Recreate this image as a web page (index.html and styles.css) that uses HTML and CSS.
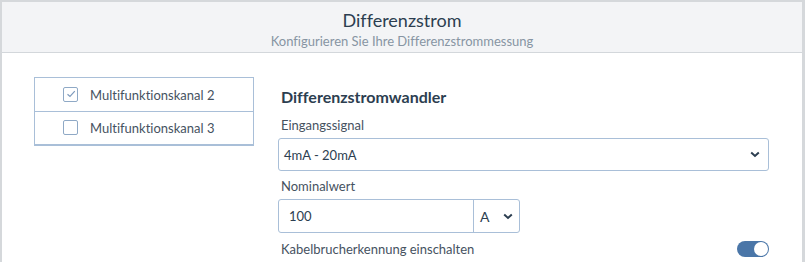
FILE: index.html
```html
<!DOCTYPE html>
<html lang="de">
<head>
<meta charset="utf-8">
<link rel="stylesheet" href="styles.css">
</head>
<body>
<div class="card">
  <div class="header">
    <div class="title">Differenzstrom</div>
    <div class="subtitle">Konfigurieren Sie Ihre Differenzstrommessung</div>
  </div>
  <div class="content">
    <div class="channels">
      <div class="channel">
        <span class="check checked"><svg width="12" height="12" viewBox="0 0 12 12"><path d="M2.5 6.2 L5 8.5 L9.8 3.2" fill="none" stroke="#7f9bbd" stroke-width="1.2"/></svg></span>
        <span class="chlabel">Multifunktionskanal 2</span>
      </div>
      <div class="channel">
        <span class="check"></span>
        <span class="chlabel">Multifunktionskanal 3</span>
      </div>
    </div>
    <div class="form">
      <h2 class="heading">Differenzstromwandler</h2>
      <div class="label first">Eingangssignal</div>
      <div class="select">
        <span>4mA - 20mA</span>
        <svg class="chev" width="10" height="7" viewBox="0 0 10 7"><path d="M1.2 1.5 L5 5 L8.8 1.5" fill="none" stroke="#2c3e50" stroke-width="2"/></svg>
      </div>
      <div class="label">Nominalwert</div>
      <div class="group">
        <div class="value">100</div>
        <div class="unit"><span>A</span><svg class="chev" width="10" height="7" viewBox="0 0 10 7"><path d="M1.2 1.5 L5 5 L8.8 1.5" fill="none" stroke="#2c3e50" stroke-width="2"/></svg></div>
      </div>
      <div class="switchrow">
        <span class="label">Kabelbrucherkennung einschalten</span>
        <span class="toggle"><span class="knob"></span></span>
      </div>
    </div>
  </div>
</div>
</body>
</html>
```
FILE: styles.css
```css
* { box-sizing: border-box; }
html, body { margin: 0; padding: 0; }
body {
  background: #d5d8db;
  font-family: "Lato", "Noto Sans", sans-serif;
  font-variant-ligatures: none;
  width: 805px;
  height: 262px;
  overflow: hidden;
  padding: 2px 2px 0 2px;
}
.card {
  background: #fff;
  height: 260px;
  width: 800px;
  overflow: hidden;
}
.header {
  background: #f3f4f6;
  border-bottom: 1px solid #d3d7db;
  height: 51px;
  text-align: center;
  padding-top: 7px;
}
.title {
  font-size: 18px;
  color: #2c3e50;
  line-height: 22px;
}
.subtitle {
  font-size: 13px;
  color: #8795a3;
  line-height: 18px;
  margin-top: 1px;
}
.content {
  display: flex;
  padding: 24px 0 0 32px;
}
.channels {
  width: 220px;
  border: 1px solid #a9bfd8;
  border-bottom-width: 2px;
  align-self: flex-start;
}
.channel {
  height: 33px;
  display: flex;
  align-items: center;
  padding-left: 28px;
}
.channel + .channel { border-top: 1px solid #a9bfd8; height: 33px; }
.check {
  width: 15px;
  height: 15px;
  border: 1px solid #8fa9c6;
  border-radius: 2px;
  display: inline-flex;
  align-items: center;
  justify-content: center;
  margin-right: 12px;
  margin-top: -1px;
}
.chlabel {
  font-size: 13px;
  color: #46525f;
}
.form {
  margin-left: 24px;
  width: 491px;
  padding-top: 10px;
}
.heading {
  margin: 0 0 0 3px;
  font-size: 16px;
  font-weight: 700;
  color: #2c3e50;
  line-height: 20px;
}
.label {
  font-size: 13px;
  color: #46525f;
  line-height: 18px;
  margin: 6px 0 4px 3px;
}
.label.first { margin-top: 9px; }
.select {
  height: 33px;
  border: 1px solid #a9bfd8;
  border-radius: 3px;
  display: flex;
  align-items: center;
  justify-content: space-between;
  padding: 0 8px 0 5px;
  font-size: 13px;
  color: #2c3e50;
}
.group {
  width: 242px;
  height: 34px;
  border: 1px solid #a9bfd8;
  border-radius: 3px;
  display: flex;
  font-size: 13px;
  color: #2c3e50;
}
.value {
  flex: 1;
  display: flex;
  align-items: center;
  padding-left: 10px;
  border-right: 1px solid #a9bfd8;
}
.unit {
  width: 45px;
  display: flex;
  align-items: center;
  justify-content: space-between;
  padding: 0 6px 0 6px;
  font-size: 14px;
}
.switchrow {
  display: flex;
  align-items: center;
  justify-content: space-between;
  margin-top: 7px;
}
.switchrow .label { margin: 0 0 0 3px; }
.toggle {
  width: 32px;
  height: 16px;
  border-radius: 8px;
  background: #4a76a8;
  position: relative;
  display: inline-block;
}
.knob {
  position: absolute;
  right: 1px;
  top: 1px;
  width: 14px;
  height: 14px;
  border-radius: 50%;
  background: #fff;
}
```
